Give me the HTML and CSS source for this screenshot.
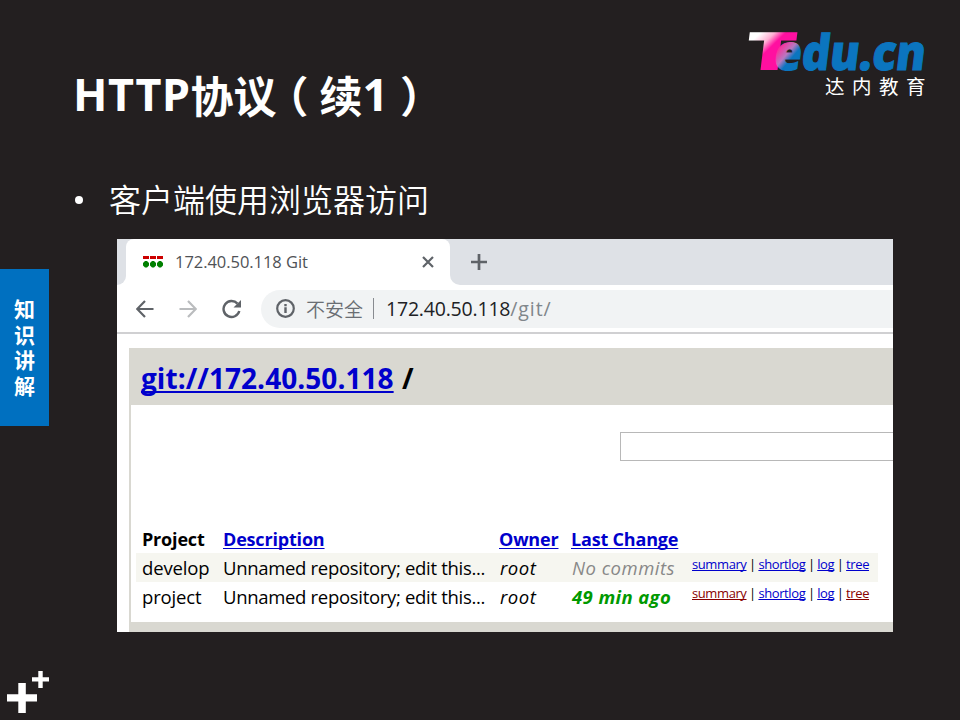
FILE: index.html
```html
<!DOCTYPE html>
<html lang="zh-CN">
<head>
<meta charset="utf-8">
<title>HTTP协议（续1）</title>
<link rel="stylesheet" href="styles.css">
</head>
<body>
<div class="slide">
  <header class="head">
    <h1><span class="latin">HTTP</span>协议<span class="open">（</span>续<span class="latin">1</span><span class="closing">）</span></h1>
    <div class="brand">
      <svg width="182" height="46" viewBox="0 0 182 46">
        <defs>
          <linearGradient id="gt" gradientUnits="userSpaceOnUse" x1="8" y1="-36" x2="28" y2="-18">
            <stop offset="0.1" stop-color="#fff"/><stop offset="0.5" stop-color="#ffb0d4"/><stop offset="0.8" stop-color="#ff10a0"/>
          </linearGradient>
          <linearGradient id="ge" gradientUnits="userSpaceOnUse" x1="3" y1="-22" x2="21" y2="-9">
            <stop offset="0" stop-color="#ff2a98"/><stop offset="0.5" stop-color="#b878c0"/><stop offset="0.8" stop-color="#0b75bf"/>
          </linearGradient>
        </defs>
        <text class="logo" transform="translate(-2 42) skewX(-7)" font-size="53" textLength="52" lengthAdjust="spacingAndGlyphs" fill="url(#gt)">T</text>
        <text class="logo heavy" transform="translate(28 41.500) skewX(-7)" font-size="49" textLength="151" lengthAdjust="spacingAndGlyphs" fill="#0b75bf" stroke="#0b75bf"><tspan fill="url(#ge)" stroke="url(#ge)">e</tspan>du.cn</text>
      </svg>
      <div class="brand-cn">达内教育</div>
    </div>
  </header>
  <p class="bullet"><i class="dot"></i>客户端使用浏览器访问</p>
  <main class="main">
    <aside class="tag">知识讲解</aside>
    <section class="browser">
      <div class="tabs">
        <div class="edge"></div>
        <div class="tab">
          <svg class="fav" width="20" height="12" viewBox="0 0 20 12">
            <path fill="#c00" d="M0 0h6v3H0zM7 0h6v3H7zM14 0h6v3h-6z"/>
            <path fill="#008000" d="M2 5h2l2 2v2.500l-2 2H2l-2-2V7zM9 5h2l2 2v2.500l-2 2H9l-2-2V7zM16 5h2l2 2v2.500l-2 2h-2l-2-2V7z"/>
          </svg>
          <span class="tab-title">172.40.50.118 Git</span>
          <svg class="close" width="12" height="12" viewBox="0 0 12 12"><path d="M1 1l10 10M11 1L1 11" stroke="#5f6368" stroke-width="2.200"/></svg>
        </div>
        <div class="rest"><svg width="16" height="16" viewBox="0 0 16 16"><path d="M0 8h16M8 0v16" stroke="#5f6368" stroke-width="2.700"/></svg></div>
      </div>
      <div class="bar">
        <svg class="back" width="18" height="18" viewBox="0 0 18 18" fill="none" stroke="#5f6368" stroke-width="2.200"><path d="M17.500 9H1.500M9 1L1.200 9 9 17"/></svg>
        <svg class="fwd" width="18" height="18" viewBox="0 0 18 18" fill="none" stroke="#babcbe" stroke-width="2.200"><path d="M.5 9h16M9 1l7.800 8L9 17"/></svg>
        <svg class="reload" width="20" height="20" viewBox="0 0 20 20"><path d="M17.300 12A8 8 0 1 1 15.500 4.600" fill="none" stroke="#5f6368" stroke-width="2.400"/><path d="M19 1v7.500h-7.500z" fill="#5f6368"/></svg>
        <div class="url">
          <svg width="19" height="19" viewBox="0 0 19 19"><circle cx="9.500" cy="9.500" r="8.300" fill="none" stroke="#5f6368" stroke-width="2.200"/><path d="M8.300 8.300h2.400V14H8.300zM8.300 5h2.400v2.200H8.300z" fill="#5f6368"/></svg>
          <span class="insecure">不安全</span><i class="sep"></i><span class="addr">172.40.50.118<span>/git/</span></span>
        </div>
      </div>
      <div class="page">
        <div class="crumb"><a>git://172.40.50.118</a> <span>/</span></div>
        <div class="content">
          <div class="search"></div>
          <div class="row th"><span>Project</span><a>Description</a><a>Owner</a><a>Last Change</a></div>
          <div class="row dark"><span>develop</span><span class="desc">Unnamed repository; edit this...</span><em>root</em><em class="none">No commits</em><span class="links"><a>summary</a> | <a>shortlog</a> | <a>log</a> | <a>tree</a></span></div>
          <div class="row"><span>project</span><span class="desc">Unnamed repository; edit this...</span><em>root</em><em class="age">49 min ago</em><span class="links"><a class="seen">summary</a> | <a>shortlog</a> | <a>log</a> | <a class="seen">tree</a></span></div>
        </div>
        <div class="foot"></div>
      </div>
    </section>
  </main>
  <footer class="plus">
    <svg width="44" height="44" viewBox="0 0 44 44" fill="#fff"><path d="M12.300 13h7.500v11.300H31v7.200H19.800v11.500h-7.500V31.500H1v-7.200h11.300zM32.300 1h4.400v6.300H43v4.200h-6.300v6.500h-4.400v-6.500H26V7.300h6.300z"/></svg>
  </footer>
</div>
</body>
</html>
```
FILE: styles.css
```css
* { box-sizing: border-box; }
body { margin: 0; font-family: "Open Sans", "Noto Sans CJK SC", sans-serif; }
.slide { width: 960px; height: 720px; background: #231f20; color: #fff; overflow: hidden; display: flex; flex-direction: column; }
.head { height: 170px; display: flex; justify-content: space-between; padding: 28px 33px 0 73px; }
h1 { margin: 32px 0 0; font: 700 43px/68px "Noto Sans CJK SC", sans-serif; white-space: nowrap; }
.latin { display: inline-block; font-family: "Noto Sans"; font-size: 45px; line-height: 60px; letter-spacing: .6px; transform: translateY(-2px); }
.open, .closing { display: inline-block; transform: translateX(-11px); }
.closing { transform: translateX(11px); }
.brand { width: 182px; }
.brand svg { display: block; overflow: visible; }
.logo { font-family: "Open Sans"; font-weight: 800; }
.heavy { stroke-width: 1px; }
.brand-cn { font: 400 19.500px/23px "Noto Sans CJK SC", sans-serif; letter-spacing: 7.500px; padding-left: 80px; margin-right: -10px; white-space: nowrap; }
.bullet { margin: 0; height: 69px; padding-left: 75px; display: flex; align-items: flex-start; font: 350 32px/56px "Noto Sans CJK SC", sans-serif; }
.dot { width: 8px; height: 8px; border-radius: 50%; background: #fff; margin: 26px 26px 0 0; }
.main { display: flex; height: 393px; }
.tag { width: 49px; height: 157px; margin: 30px 68px 0 0; padding: 27px 13px 0 14px; background: #0070c0; font: 700 21px/25.500px "Noto Sans CJK SC", sans-serif; word-break: break-all; }
.browser { width: 776px; background: #fff; color: #000; overflow: hidden; }
.tabs { height: 46px; display: flex; background: linear-gradient(#dee1e6 10px, #fff 10px); }
.edge, .rest { height: 46px; background: #dee1e6; }
.edge { width: 9px; border-bottom-right-radius: 9px; }
.tab { width: 324px; display: flex; align-items: center; padding: 0 16px 0 17px; background: #fff; border-radius: 8px 8px 0 0; }
.tab-title { margin-left: 12px; font-size: 16.500px; color: #4f5256; letter-spacing: -.05px; white-space: nowrap; padding-bottom: 1px; }
.close { margin-left: auto; }
.rest { flex: 1; border-bottom-left-radius: 10px; padding: 14px 0 0 21px; }
.bar { height: 49px; border-bottom: 2px solid #d0d0d2; display: flex; align-items: center; padding-left: 19px; }
.fwd { margin-left: 25px; }
.reload { margin-left: 25px; }
.url { margin-left: 19px; flex: 1; height: 38px; border-radius: 19px 0 0 19px; background: #f1f3f4; display: flex; align-items: center; padding-left: 15px; white-space: nowrap; }
.insecure { margin-left: 11px; font: 350 19px/28px "Noto Sans CJK SC", sans-serif; color: #6a6e73; }
.sep { width: 1px; height: 21px; background: #888b90; margin: 0 12px 0 10px; }
.addr { font-size: 19.500px; letter-spacing: -.2px; color: #202124; }
.addr span { color: #80868b; letter-spacing: .9px; }
.page { margin: 14px 0 0 12px; }
.crumb { height: 57px; background: #d9d8d1; padding-left: 12px; font-weight: 700; font-size: 28px; line-height: 60px; letter-spacing: .05px; white-space: pre; }
.crumb span { margin-left: 1px; }
.crumb a, .th a { color: #0000cc; text-decoration: underline; text-underline-offset: 2px; text-decoration-thickness: 2px; text-decoration-skip-ink: none; }
.content { height: 217px; border-left: 2px solid #d9d8d1; padding-top: 27px; }
.search { margin-left: 489px; height: 29px; border: 1px solid #b8b8b8; border-right: 0; margin-bottom: 64px; }
.row { margin-left: 5px; width: 742px; height: 29px; display: grid; grid-template-columns: 81px 276px 72px 121px 180px; padding-left: 6px; font-size: 18.500px; line-height: 29px; letter-spacing: -.15px; white-space: nowrap; }
.row > * { justify-self: start; }
.desc { letter-spacing: -.31px; }
.dark { background: #f6f6f0; }
.th { font-weight: 700; font-size: 18px; height: 28px; letter-spacing: -.18px; }
.th a { text-decoration-thickness: 1px; }
em { padding-left: 1px; letter-spacing: .5px; }
.age { color: #009900; font-weight: 700; letter-spacing: .4px; }
.none { color: #888; }
.links { font-size: 13px; line-height: 22px; letter-spacing: -.4px; word-spacing: -.4px; }
.links a { color: #0000cc; text-decoration: underline; text-decoration-skip-ink: none; }
.links .seen { color: #880000; }
.foot { height: 10px; background: #d9d8d1; }
.plus { padding: 38px 0 0 6px; }
```
